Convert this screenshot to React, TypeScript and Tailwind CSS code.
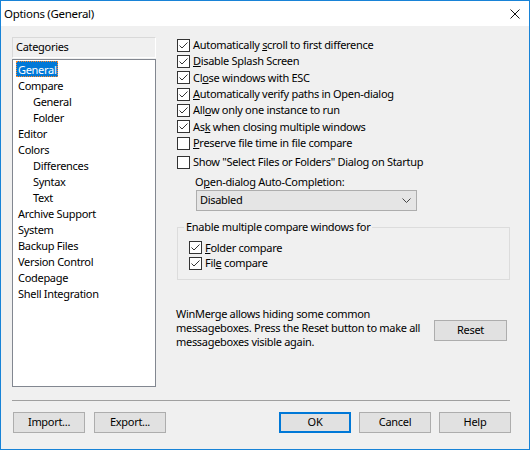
import type { ReactNode } from 'react';

function CheckBox({ checked }: { checked: boolean }) {
  return (
    <svg width="13" height="13" viewBox="0 0 13 13" className="shrink-0">
      <rect x="0.5" y="0.5" width="12" height="12" fill="#fff" stroke="#333" />
      {checked && <path d="M2.5 6.5 L5 9 L10.5 3.5" fill="none" stroke="#333" strokeWidth="1" />}
    </svg>
  );
}

function Option({ checked, children, className = '' }: { checked: boolean; children: ReactNode; className?: string }) {
  return (
    <div className={`flex items-center gap-[3px] ${className}`}>
      <CheckBox checked={checked} />
      <span className="whitespace-nowrap">{children}</span>
    </div>
  );
}

function Btn({ children, primary, className = '' }: { children: ReactNode; primary?: boolean; className?: string }) {
  return (
    <button
      className={`w-[72px] h-[21px] bg-[#e1e1e1] flex items-center justify-center ${
        primary ? 'border-2 border-[#0078d7]' : 'border border-[#adadad]'
      } ${className}`}
    >
      {children}
    </button>
  );
}

const categories = [
  { name: 'General', sub: false, selected: true },
  { name: 'Compare', sub: false },
  { name: 'General', sub: true },
  { name: 'Folder', sub: true },
  { name: 'Editor', sub: false },
  { name: 'Colors', sub: false },
  { name: 'Differences', sub: true },
  { name: 'Syntax', sub: true },
  { name: 'Text', sub: true },
  { name: 'Archive Support', sub: false },
  { name: 'System', sub: false },
  { name: 'Backup Files', sub: false },
  { name: 'Version Control', sub: false },
  { name: 'Codepage', sub: false },
  { name: 'Shell Integration', sub: false },
];

export default function App() {
  return (
    <div className="w-[530px] h-[450px] flex flex-col border border-[#1883d7] bg-[#f0f0f0] text-[11px] tracking-[-0.3px] text-black font-['Noto_Sans',sans-serif]">
      {/* title bar */}
      <div className="h-[25px] bg-white flex items-center pl-[3px]">
        <span className="text-[11.5px]">Options (General)</span>
        <svg width="10" height="10" viewBox="0 0 10 10" className="ml-auto mr-[9px]">
          <path d="M0.5 0.5 L9.5 9.5 M9.5 0.5 L0.5 9.5" stroke="#111" strokeWidth="1" />
        </svg>
      </div>

      <div className="flex-1 flex flex-col pl-[11px] pt-[11px]">
        <div className="flex h-[350px]">
          {/* categories */}
          <div className="w-[144px] flex flex-col">
            <div className="h-[21px] flex items-center pl-[3px] border-t border-l border-[#d9d9d9] border-r border-b border-r-white border-b-white">
              Categories
            </div>
            <div className="mt-[1px] h-[328px] bg-white border border-[#828790] pt-[1px]">
              {categories.map((c, i) => (
                <div key={i} className={`h-[16px] flex items-center ${c.sub ? 'pl-[18px]' : 'pl-[3px]'}`}>
                  <span
                    className={`h-[16px] flex items-center px-[1px] leading-none ${
                      c.selected ? 'bg-[#0078d7] text-white border border-dotted border-[#ff8728]' : 'border border-transparent'
                    }`}
                  >
                    {c.name}
                  </span>
                </div>
              ))}
            </div>
          </div>

          {/* options */}
          <div className="ml-[20px] w-[334px] flex flex-col">
            <div className="pl-[1px] flex flex-col">
              <Option checked className="h-[16.33px]">Automatically <u>s</u>croll to first difference</Option>
              <Option checked className="h-[16.33px]"><u>D</u>isable Splash Screen</Option>
              <Option checked className="h-[16.33px]">Cl<u>o</u>se windows with ESC</Option>
              <Option checked className="h-[16.33px]"><u>A</u>utomatically verify paths in Open-dialog</Option>
              <Option checked className="h-[16.33px]">All<u>o</u>w only one instance to run</Option>
              <Option checked className="h-[16.33px]">As<u>k</u> when closing multiple windows</Option>
              <Option checked={false} className="h-[16.33px]"><u>P</u>reserve file time in file compare</Option>
              <Option checked={false} className="h-[16px] mt-[3px]">Show "Select Files or Folders" Dialog on Startup</Option>
            </div>

            <div className="mt-[3.7px] h-[16px] flex items-center ml-[19px]">
              O<u>p</u>en-dialog Auto-Completion:
            </div>
            <div className="ml-[20px] w-[221px] h-[21px] bg-[#e5e5e5] border border-[#adadad] flex items-center pl-[3px] pr-[5px]">
              <span>Disabled</span>
              <svg width="9" height="5" viewBox="0 0 9 5" className="ml-auto">
                <path d="M0.5 0.5 L4.5 4.5 L8.5 0.5" fill="none" stroke="#444" strokeWidth="1" />
              </svg>
            </div>

            <div className="mt-[16px] ml-[1px] w-[333px] h-[53px] border border-[#dcdcdc] flex flex-col">
              <div className="-mt-[9px] ml-[6px] px-[2px] h-[16px] flex items-center self-start bg-[#f0f0f0]">
                Enable multiple compare windows for
              </div>
              <div className="pl-[11px] mt-[5px] flex flex-col">
                <Option checked className="h-[16px]"><u>F</u>older compare</Option>
                <Option checked className="h-[15px]">Fil<u>e</u> compare</Option>
              </div>
            </div>

            <div className="mt-[27px] flex items-start">
              <p className="w-[258px] leading-[14px] whitespace-nowrap">
                WinMerge allows hiding some common
                <br />
                messageboxes. Press the Reset button to make all
                <br />
                messageboxes visible again.
              </p>
              <Btn className="mt-[13px] w-[73px]">Reset</Btn>
            </div>
          </div>
        </div>

        <div className="mt-[13px] h-px w-[498px] bg-[#a0a0a0]" />

        <div className="mt-[11px] ml-[1px] flex">
          <Btn>Import...</Btn>
          <Btn className="ml-[9px]">Export...</Btn>
          <Btn primary className="ml-[113px]">OK</Btn>
          <Btn className="ml-[8px]">Cancel</Btn>
          <Btn className="ml-[8px]">Help</Btn>
        </div>
      </div>
    </div>
  );
}
